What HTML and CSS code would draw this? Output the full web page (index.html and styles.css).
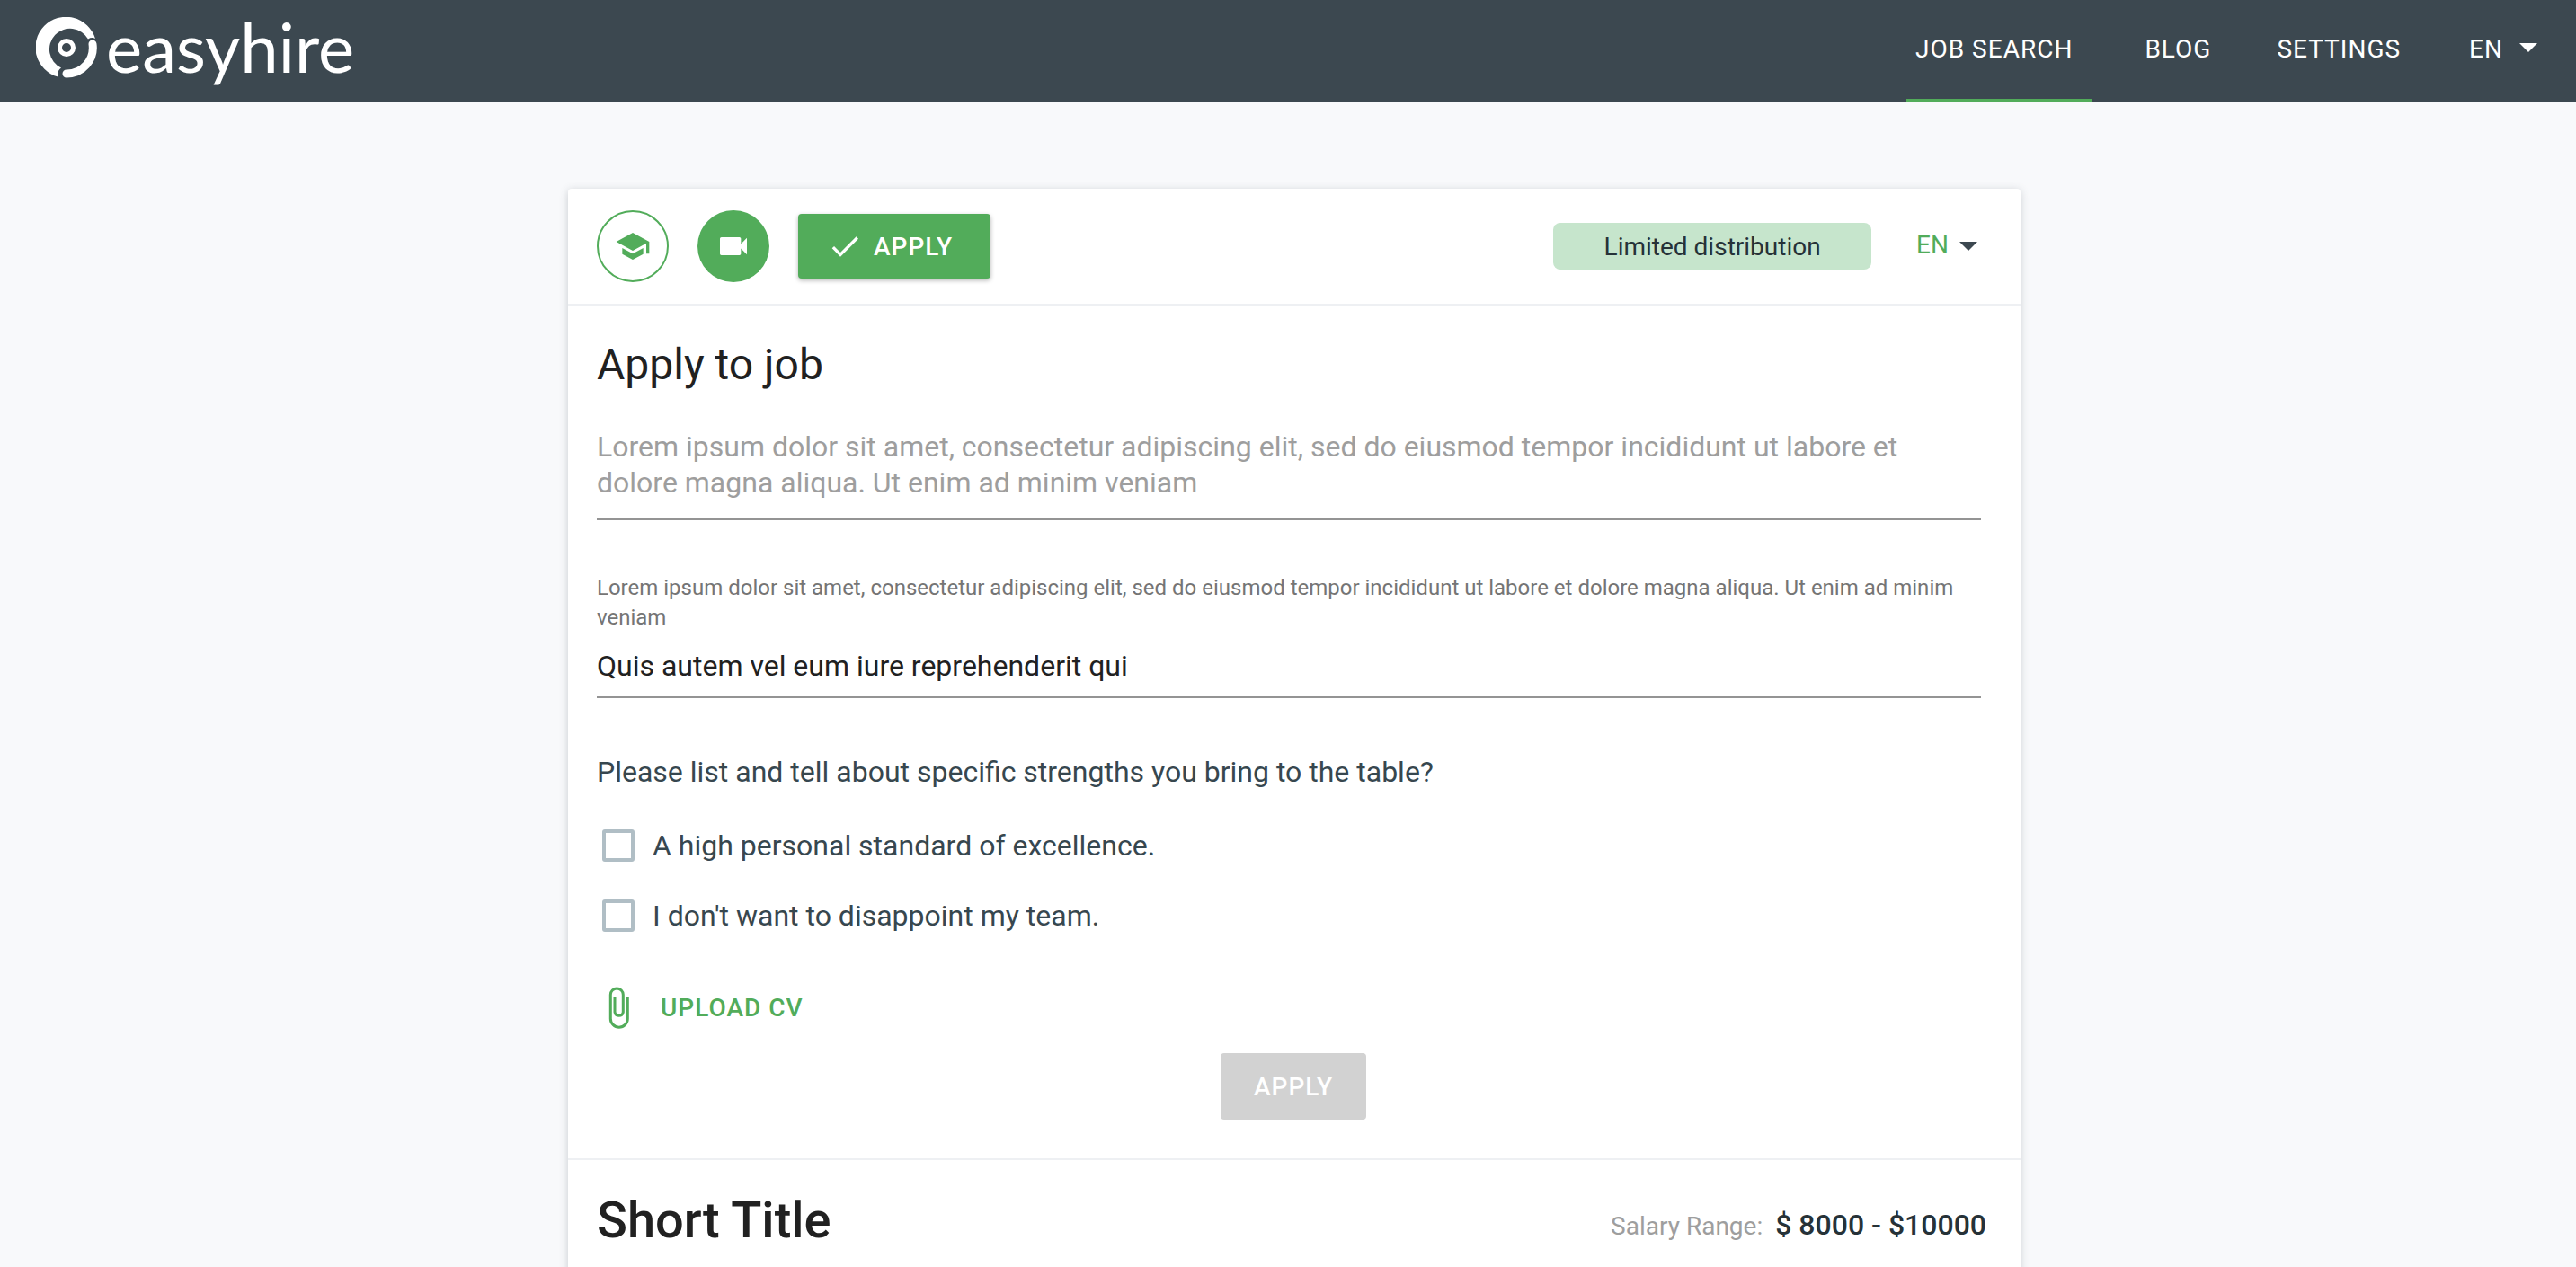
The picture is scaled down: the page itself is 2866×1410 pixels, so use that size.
FILE: index.html
```html
<!DOCTYPE html>
<html lang="en">
<head>
<meta charset="utf-8">
<title>easyhire</title>
<link rel="stylesheet" href="styles.css">
</head>
<body>
<header class="topbar">
  <a class="brand">
    <svg class="brand-mark" viewBox="0 0 68 68" aria-hidden="true">
      <path fill="#fff" d="M66 24A34 34 0 1 0 24.5 66.6Q23 60 28 56.5A23 23 0 1 1 58 24.5Q62 22 66 24Z"/>
      <path fill="none" stroke="#fff" stroke-width="9" stroke-linecap="round" d="M63 30A29 29 0 0 1 34 63"/>
      <circle cx="34" cy="34" r="7.5" fill="none" stroke="#fff" stroke-width="5"/>
    </svg>
    <span class="brand-name">easyhire</span>
  </a>
  <nav class="nav">
    <a class="nav-item nav-item-active">JOB SEARCH</a>
    <a class="nav-item">BLOG</a>
    <a class="nav-item">SETTINGS</a>
    <a class="nav-item">EN<span class="caret caret-white"></span></a>
  </nav>
</header>
<main class="page">
  <article class="card">
    <div class="toolbar">
      <span class="round round-outline">
        <svg class="icon40" viewBox="0 0 24 24"><path fill="currentColor" d="M5 13.18v4L12 21l7-3.82v-4L12 17l-7-3.82zM12 3L1 9l11 6 9-4.91V17h2V9L12 3z"/></svg>
      </span>
      <span class="round round-solid">
        <svg class="icon40" viewBox="0 0 24 24"><path fill="currentColor" d="M17 10.5V7c0-.55-.45-1-1-1H4c-.55 0-1 .45-1 1v10c0 .55.45 1 1 1h12c.55 0 1-.45 1-1v-3.5l4 4v-11l-4 4z"/></svg>
      </span>
      <button class="btn-apply">
        <svg class="icon40" viewBox="0 0 24 24"><path fill="currentColor" d="M9 16.17L4.83 12l-1.42 1.41L9 19 21 7l-1.41-1.41z"/></svg>
        <span>APPLY</span>
      </button>
      <span class="badge">Limited distribution</span>
      <span class="lang">EN<span class="caret caret-dark"></span></span>
    </div>
    <section class="form">
      <h1 class="form-title">Apply to job</h1>
      <div class="field field-placeholder">Lorem ipsum dolor sit amet, consectetur adipiscing elit, sed do eiusmod tempor incididunt ut labore et dolore magna aliqua. Ut enim ad minim veniam</div>
      <label class="field-label">Lorem ipsum dolor sit amet, consectetur adipiscing elit, sed do eiusmod tempor incididunt ut labore et dolore magna aliqua. Ut enim ad minim veniam</label>
      <div class="field field-value">Quis autem vel eum iure reprehenderit qui</div>
      <p class="question">Please list and tell about specific strengths you bring to the table?</p>
      <div class="check"><span class="box"></span><span>A high personal standard of excellence.</span></div>
      <div class="check"><span class="box"></span><span>I don't want to disappoint my team.</span></div>
      <div class="upload">
        <svg class="clip" viewBox="17 5 24 47" aria-hidden="true"><path fill="none" stroke="currentColor" stroke-width="3" d="M38.3 16V40.7A9.5 9.5 0 0 1 19.3 40.7V14A7 7 0 0 1 33.3 14V33.3A4.7 4.7 0 0 1 24 33.3V16"/></svg>
        <span>UPLOAD CV</span>
      </div>
      <div class="submit-row"><button class="btn-disabled">APPLY</button></div>
    </section>
    <section class="summary">
      <h2 class="summary-title">Short Title</h2>
      <div class="salary"><span class="salary-label">Salary Range:</span><span class="salary-value">$ 8000 - $10000</span></div>
    </section>
  </article>
</main>
</body>
</html>
```
FILE: styles.css
```css
* { box-sizing: border-box; }
html, body { margin: 0; height: 100%; }
body {
  background: #f8f9fb;
  font-family: Roboto, "Liberation Sans", sans-serif;
  overflow: hidden;
}
.topbar {
  height: 114px;
  background: #3c4850;
  display: flex;
  justify-content: space-between;
  color: #fff;
}
.brand { display: flex; align-items: flex-start; padding: 19px 0 0 40px; }
.brand-mark { width: 68px; height: 68px; display: block; }
.brand-name {
  font-family: Lato, sans-serif;
  font-weight: 400;
  font-size: 76px;
  line-height: 66px;
  margin-left: 10px;
}
.nav { display: flex; font-size: 28px; letter-spacing: 1px; padding-right: 43px; }
.nav-item { display: flex; align-items: center; height: 114px; padding-bottom: 5px; margin-left: 73px; }
.nav-item-active { border-bottom: 4px solid #52ac5a; padding: 0 21px 1px 10px; margin-left: 0; }
.nav-item:nth-child(2) { margin-left: 59px; }
.nav-item:nth-child(4) { margin-left: 76px; }
.caret { display: inline-block; width: 0; height: 0; border-left: 10px solid transparent; border-right: 10px solid transparent; }
.caret-white { border-top: 10px solid #fff; margin: 0 0 4px 18px; }
.caret-dark { border-top: 10px solid #3c4850; margin: 4px 0 0 12px; }

.page { padding: 96px 0 0 14px; }
.card {
  width: 1616px;
  margin: 0 auto;
  background: #fff;
  border-radius: 4px;
  box-shadow: 0 2px 10px rgba(60, 72, 80, 0.25);
}
.toolbar {
  height: 130px;
  display: flex;
  align-items: center;
  padding: 0 48px 0 32px;
  border-bottom: 2px solid #eef0f3;
}
.round { width: 80px; height: 80px; border-radius: 50%; display: flex; align-items: center; justify-content: center; margin-right: 32px; color: #52ac5a; }
.round-outline { border: 2px solid #52ac5a; }
.round-solid { background: #52ac5a; color: #fff; }
.icon40 { width: 40px; height: 40px; display: block; flex: none; }
.btn-apply {
  width: 214px;
  height: 72px;
  border: 0;
  border-radius: 4px;
  background: #52ac5a;
  color: #fff;
  display: flex;
  align-items: center;
  padding: 0 0 0 32px;
  font: 500 28px Roboto, sans-serif;
  letter-spacing: 1px;
  box-shadow: 0 2px 5px rgba(0, 0, 0, 0.3);
}
.btn-apply span { margin-left: 12px; }
.badge {
  margin-left: auto;
  width: 354px;
  height: 52px;
  border-radius: 8px;
  background: #c6e5cc;
  color: #263238;
  font-size: 28px;
  display: flex;
  align-items: center;
  justify-content: center;
}
.lang { margin: 0 0 4px 50px; color: #52ac5a; font-size: 28px; display: flex; align-items: center; }

.form { padding: 36px 44px 43px 32px; }
.form-title { margin: 0; font-size: 48px; line-height: 60px; font-weight: 400; color: #212121; }
.field { border-bottom: 2px solid #949494; font-size: 32px; line-height: 40px; }
.field-placeholder { margin-top: 41px; padding-bottom: 20px; color: #9e9e9e; }
.field-label { display: block; margin-top: 59px; font-size: 24px; line-height: 33px; color: #757575; }
.field-value { margin-top: 17px; padding-bottom: 14px; color: #212121; }
.question { margin: 62px 0 0; font-size: 32px; line-height: 40px; color: #37474f; }
.check { display: flex; align-items: center; height: 44px; margin-top: 40px; font-size: 32px; color: #37474f; }
.check + .check { margin-top: 34px; }
.box { width: 36px; height: 36px; border: 4px solid #b0bec5; border-radius: 3px; margin: 0 20px 0 6px; flex: none; }
.upload { display: flex; align-items: center; margin-top: 57px; color: #52ac5a; font-size: 28px; font-weight: 500; letter-spacing: 1px; }
.clip { width: 24px; height: 47px; margin-left: 13px; display: block; }
.upload span { margin-left: 34px; }
.submit-row { display: flex; justify-content: center; margin-top: 27px; padding-left: 10px; }
.btn-disabled { width: 162px; height: 74px; border: 0; border-radius: 4px; background: #d2d2d2; color: #fff; font: 500 28px Roboto, sans-serif; letter-spacing: 1px; }

.summary { border-top: 2px solid #eef0f3; padding: 32px 38px 200px 32px; display: flex; justify-content: space-between; align-items: center; }
.summary-title { margin: 0; font-size: 56px; line-height: 70px; font-weight: 500; color: #212121; }
.salary { display: flex; align-items: baseline; padding-top: 10px; }
.salary-label { font-size: 28px; color: #9e9e9e; margin-right: 14px; }
.salary-value { font-size: 32px; font-weight: 500; color: #263238; }
```
